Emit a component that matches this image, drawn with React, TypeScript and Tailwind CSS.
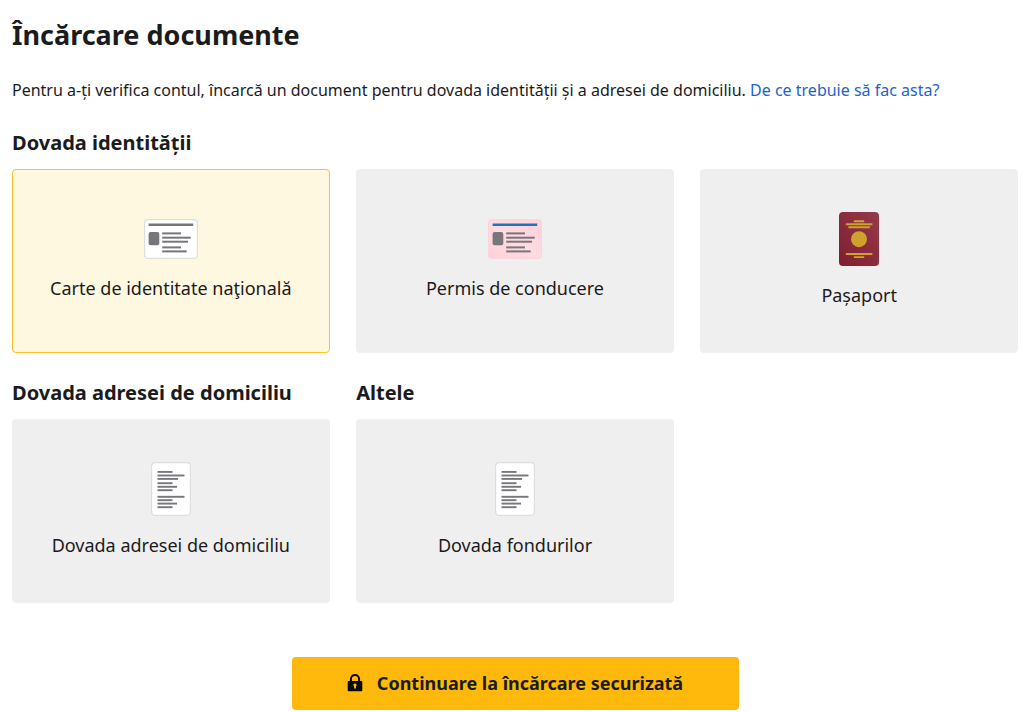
import { useState } from 'react';
import type { ReactNode } from 'react';

interface DocumentOption {
  id: string;
  label: string;
  icon: ReactNode;
}

// [y, x end] of each text line on the card
const CARD_LINES = [[14.4, 37], [18.7, 46.7], [22.7, 44], [28.4, 37], [32.4, 42.7]];

// [y, x end] of each text line on the sheet
const SHEET_LINES = [
  [9.9, 21.5], [13.5, 33.5], [16.9, 27], [21.2, 21.5], [24.8, 26], [28.2, 21.5],
  [34.8, 33.5], [38.2, 21.5], [41.6, 26], [45.2, 21.5],
];

function CardIcon({ pink = false }: { pink?: boolean }) {
  return (
    <svg width="54" height="40" viewBox="0 0 54 40" fill="none">
      <defs>
        <linearGradient id="pinkCard" x1="1" y1="0" x2="0" y2="1">
          <stop stopColor="#ffd0da" />
          <stop offset=".5" stopColor="#ffdbe2" />
          <stop offset="1" stopColor="#ffd0da" />
        </linearGradient>
      </defs>
      <rect x=".6" y=".6" width="52.8" height="38.8" rx="3.5" fill={pink ? 'url(#pinkCard)' : '#fff'} stroke={pink ? '#fcd5dc' : '#dedee0'} strokeWidth="1.2" />
      <path d="M4.6 5.8h44.6" stroke={pink ? '#1976bd' : '#77767b'} strokeWidth="2.6" />
      <rect x="4.6" y="13" width="10.7" height="13.3" rx="2" fill="#77767b" />
      {CARD_LINES.map(([y, end]) => (
        <path key={y} d={`M18.2 ${y}H${end}`} stroke="#77767b" strokeWidth="2" />
      ))}
    </svg>
  );
}

function PassportIcon() {
  return (
    <svg width="40" height="54" viewBox="0 0 40 54" fill="none">
      <defs>
        <linearGradient id="cover" x1="1" y1="0" x2="0" y2="1">
          <stop stopColor="#963a4b" />
          <stop offset="1" stopColor="#7f1d30" />
        </linearGradient>
      </defs>
      <rect width="40" height="54" rx="4" fill="url(#cover)" />
      <path d="M14.8 9.2h10.4M6.8 12.2h26.6M9.4 15.2h21.4M6.8 42h26.6M14.8 45.1h10.4" stroke="#cfa12e" strokeWidth="1.9" />
      <circle cx="20" cy="27.2" r="8" fill="#cfa12e" />
    </svg>
  );
}

function SheetIcon() {
  return (
    <svg width="40" height="54" viewBox="0 0 40 54" fill="none">
      <rect x=".6" y=".6" width="38.8" height="52.8" rx="3.5" fill="#fff" stroke="#dedee0" strokeWidth="1.2" />
      {SHEET_LINES.map(([y, end]) => (
        <path key={y} d={`M6.5 ${y}H${end}`} stroke="#77767b" strokeWidth="1.9" />
      ))}
    </svg>
  );
}

function LockIcon() {
  return (
    <svg width="16" height="18" viewBox="0 0 16 18" fill="none">
      <path d="M3.9 8V5.2a4.1 4.1 0 0 1 8.2 0V8" stroke="#080704" strokeWidth="2" />
      <path fillRule="evenodd" d="M1.7 7h12.6c.6 0 1 .4 1 1v8.3c0 .6-.4 1-1 1H1.7c-.6 0-1-.4-1-1V8c0-.6.4-1 1-1ZM8 9.4a1.7 1.7 0 0 0-.9 3.1v2.1h1.8v-2.1A1.7 1.7 0 0 0 8 9.4Z" fill="#080704" />
    </svg>
  );
}

const IDENTITY: DocumentOption[] = [
  { id: 'id-card', label: 'Carte de identitate naţională', icon: <CardIcon /> },
  { id: 'licence', label: 'Permis de conducere', icon: <CardIcon pink /> },
  { id: 'passport', label: 'Pașaport', icon: <PassportIcon /> },
];

const OTHER: (DocumentOption & { title: string })[] = [
  { id: 'address', title: 'Dovada adresei de domiciliu', label: 'Dovada adresei de domiciliu', icon: <SheetIcon /> },
  { id: 'funds', title: 'Altele', label: 'Dovada fondurilor', icon: <SheetIcon /> },
];

function OptionCard({ option, selected, onSelect }: { option: DocumentOption; selected: boolean; onSelect: (id: string) => void }) {
  return (
    <button
      type="button"
      onClick={() => onSelect(option.id)}
      className={`flex h-[183.5px] w-full flex-col items-center justify-center gap-4 rounded border text-[18px] leading-[27px] ${
        selected ? 'border-[#ffc02a] bg-[#fff8e1]' : 'border-[#efefef] bg-[#efefef]'
      }`}
    >
      {option.icon}
      <span>{option.label}</span>
    </button>
  );
}

export default function App() {
  const [selected, setSelected] = useState('id-card');

  return (
    <main className="h-[712px] overflow-hidden bg-white pl-3 pr-1.5 pt-4 font-['Noto_Sans',sans-serif] text-[#1b1b1d]">
      <h1 className="text-[27px] font-bold leading-[38px]">Încărcare documente</h1>
      <p className="mt-6 text-[16px] leading-6">
        Pentru a-ți verifica contul, încarcă un document pentru dovada identității și a adresei de domiciliu.{' '}
        <a href="#" className="text-[#1c64c8]">De ce trebuie să fac asta?</a>
      </p>

      <h2 className="mt-[26px] text-[20px] font-bold leading-[30px]">Dovada identității</h2>
      <div className="mt-[11px] grid grid-cols-3 gap-x-[26.6px]">
        {IDENTITY.map((option) => (
          <OptionCard key={option.id} option={option} selected={selected === option.id} onSelect={setSelected} />
        ))}
      </div>

      <div className="mt-[25.5px] grid grid-cols-3 gap-x-[26.6px]">
        {OTHER.map((option) => (
          <section key={option.id}>
            <h2 className="mb-[11px] text-[20px] font-bold leading-[30px]">{option.title}</h2>
            <OptionCard option={option} selected={selected === option.id} onSelect={setSelected} />
          </section>
        ))}
      </div>

      <button
        type="button"
        className="mx-auto mt-[54px] flex h-[53.5px] w-[447px] items-center justify-center gap-3.5 rounded bg-[#ffb80c] text-[18px] font-bold"
      >
        <LockIcon />
        Continuare la încărcare securizată
      </button>
    </main>
  );
}
